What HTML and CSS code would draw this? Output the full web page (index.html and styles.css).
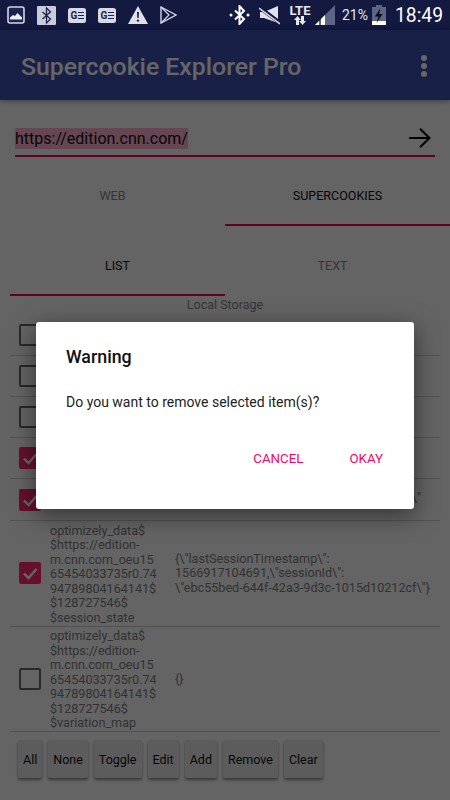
FILE: index.html
```html
<!DOCTYPE html>
<html lang="en">
<head>
    <meta charset="UTF-8">
    <meta name="viewport" content="width=device-width, initial-scale=1.0">
    <title>Supercookie Explorer Pro</title>
    <link rel="stylesheet" href="styles.css">
</head>
<body>
    <div class="screen">
        <!-- Status Bar -->
        <div class="status-bar">
            <div class="notify-icons">
                <svg class="notify" width="18" height="18" viewBox="0 0 18 18"><rect x="1" y="1" width="16" height="16" rx="2" fill="#1b2350" stroke="#d4d6e2" stroke-width="1.6"/><path d="M3 13.5v-2l3-2.5 2 1 2.5-3 4.5 4.5v2z" fill="#eceef4"/></svg>
                <svg class="notify" width="19" height="19" viewBox="0 0 19 19"><rect width="19" height="19" rx="1" fill="#c9cbdb"/><path d="M5.5 6l8 7-4 4V2l4 4-8 7" fill="none" stroke="#1b2350" stroke-width="1.3"/></svg>
                <svg class="notify" width="18" height="15" viewBox="0 0 18 15"><rect width="18" height="15" rx="2.5" fill="#d6d8e4"/><text x="2.5" y="11" class="g-text">G</text><path d="M10 4.5h6M10 7.5h6M10 10.5h6" stroke="#1b2350" stroke-width="1.1"/></svg>
                <svg class="notify" width="18" height="15" viewBox="0 0 18 15"><rect width="18" height="15" rx="2.5" fill="#d6d8e4"/><text x="2.5" y="11" class="g-text">G</text><path d="M10 4.5h6M10 7.5h6M10 10.5h6" stroke="#1b2350" stroke-width="1.1"/></svg>
                <svg class="notify" width="20" height="18" viewBox="0 0 20 18"><path d="M10 0l10 18H0z" fill="#dfe0ea"/><path d="M9 6h2l-.3 6H9.3z" fill="#1b2350"/><circle cx="10" cy="14.6" r="1.2" fill="#1b2350"/></svg>
                <svg class="notify" width="17" height="18" viewBox="0 0 17 18"><path d="M1 1l15 8L1 17z" fill="none" stroke="#d4d6e2" stroke-width="1.4"/><path d="M1 1l8 8-8 8" fill="none" stroke="#d4d6e2" stroke-width="1.2"/></svg>
            </div>
            <div class="system-icons">
                <svg width="21" height="20" viewBox="0 0 21 20"><path d="M6 5.5l9 8.5-4.5 5V1L15 6l-9 8.500" fill="none" stroke="#fff" stroke-width="2"/><circle cx="2" cy="10" r="1.500" fill="#fff"/><circle cx="19" cy="10" r="1.500" fill="#fff"/></svg>
                <svg class="mute" width="21" height="20" viewBox="0 0 21 20"><path d="M1 7h4l14-6v17L5 13H1z" fill="#dfe0ea"/><path d="M0 2l21 16" stroke="#13193f" stroke-width="4"/><path d="M0 3l21 16" stroke="#dfe0ea" stroke-width="1.500"/></svg>
                <div class="lte">
                    <span class="lte-text">LTE</span>
                    <svg width="12" height="9" viewBox="0 0 12 9"><path d="M3.500 0L7 4H5v5H2V4H0zM8.500 9L5 5h2V0h3v5h2z" fill="#e6e7ef"/></svg>
                </div>
                <svg class="signal" width="20" height="20" viewBox="0 0 20 20"><path d="M0 20L20 0v20z" fill="#5d6486"/><path d="M0 20l4-4v4zM6 20v-6l4-4v10z" fill="#fff"/></svg>
                <span class="battery-text">21%</span>
                <svg class="battery" width="14" height="20" viewBox="0 0 14 20"><path d="M4 0h6v2h4v18H0V2h4z" fill="#5d6486"/><path d="M0 16h14v4H0z" fill="#fff"/><path d="M8.500 3L3 11.500h3.500L4.500 18l6-9H7z" fill="#080a14"/></svg>
                <span class="clock">18:49</span>
            </div>
        </div>

        <!-- Toolbar -->
        <div class="toolbar">
            <span class="toolbar-title">Supercookie Explorer Pro</span>
            <div class="overflow-menu"><i></i><i></i><i></i></div>
        </div>

        <!-- URL Row -->
        <div class="url-row">
            <span class="url-text">https://edition.cnn.com/</span>
            <svg width="22" height="20" viewBox="0 0 22 20"><path d="M0 10h20M11 .800L20.500 10 11 19.200" fill="none" stroke="#000" stroke-width="2"/></svg>
        </div>

        <!-- Main Tabs -->
        <div class="tabs">
            <div class="tab">WEB</div>
            <div class="tab active">SUPERCOOKIES</div>
        </div>

        <!-- Sub Tabs -->
        <div class="tabs sub-tabs">
            <div class="tab active">LIST</div>
            <div class="tab">TEXT</div>
        </div>

        <div class="section-label">Local Storage</div>

        <!-- Storage List -->
        <div class="list">
            <div class="row short">
                <span class="check"></span>
            </div>
            <div class="row short">
                <span class="check"></span>
            </div>
            <div class="row short">
                <span class="check"></span>
            </div>
            <div class="row short">
                <span class="check checked"><svg width="22" height="22" viewBox="0 0 22 22"><path d="M5 11.500l4.500 4.500L17.500 7" fill="none" stroke="#fff" stroke-width="2.400"/></svg></span>
            </div>
            <div class="row short">
                <span class="check checked"><svg width="22" height="22" viewBox="0 0 22 22"><path d="M5 11.500l4.500 4.500L17.500 7" fill="none" stroke="#fff" stroke-width="2.400"/></svg></span>
                <div class="row-tail">\"</div>
            </div>
            <div class="row">
                <span class="check checked"><svg width="22" height="22" viewBox="0 0 22 22"><path d="M5 11.500l4.500 4.500L17.500 7" fill="none" stroke="#fff" stroke-width="2.400"/></svg></span>
                <div class="row-name">optimizely_data$<br>$https://edition-<br>m.cnn.com_oeu15<br>65454033735r0.74<br>94789804164141$<br>$128727546$<br>$session_state</div>
                <div class="row-value">{\"lastSessionTimestamp\":<br>1566917104691,\"sessionId\":<br>\"ebc55bed-644f-42a3-9d3c-1015d10212cf\"}</div>
            </div>
            <div class="row">
                <span class="check"></span>
                <div class="row-name">optimizely_data$<br>$https://edition-<br>m.cnn.com_oeu15<br>65454033735r0.74<br>94789804164141$<br>$128727546$<br>$variation_map</div>
                <div class="row-value">{}</div>
            </div>
        </div>

        <!-- Action Buttons -->
        <div class="actions">
            <button class="action">All</button>
            <button class="action">None</button>
            <button class="action">Toggle</button>
            <button class="action">Edit</button>
            <button class="action">Add</button>
            <button class="action">Remove</button>
            <button class="action">Clear</button>
        </div>

        <!-- Dialog -->
        <div class="scrim">
            <div class="dialog">
                <div class="dialog-title">Warning</div>
                <div class="dialog-body">Do you want to remove selected item(s)?</div>
                <div class="dialog-buttons">
                    <span class="dialog-button">CANCEL</span>
                    <span class="dialog-button">OKAY</span>
                </div>
            </div>
        </div>
    </div>
</body>
</html>
```

FILE: styles.css
```css
/* General Styles */
body {
    margin: 0;
    font-family: Roboto, "Liberation Sans", sans-serif;
    background: #fafafa;
}

.screen {
    position: relative;
    width: 450px;
    height: 800px;
    overflow: hidden;
    background: #fafafa;
}

/* Status Bar */
.status-bar {
    display: flex;
    justify-content: space-between;
    align-items: center;
    height: 30px;
    background: #13193f;
    color: #fff;
}

.notify-icons {
    display: flex;
    align-items: center;
    margin-left: 1px;
}

.notify {
    display: block;
    margin: 0 6px;
}

.g-text {
    font-size: 10px;
    font-weight: 700;
    fill: #1b2350;
}

.system-icons {
    display: flex;
    align-items: center;
    margin-right: 7px;
}

.mute {
    margin-left: 9px;
}

.lte {
    display: flex;
    flex-direction: column;
    align-items: center;
    margin-left: 9px;
    width: 22px;
}

.lte-text {
    font-size: 13px;
    font-weight: 700;
    line-height: 11px;
    color: #e6e7ef;
}

.signal {
    margin-left: 4px;
}

.battery-text {
    margin-left: 7px;
    font-size: 14px;
    color: #e6e7ef;
}

.battery {
    margin-left: 4px;
}

.clock {
    margin-left: 9px;
    font-size: 19.3px;
}

/* Toolbar */
.toolbar {
    display: flex;
    justify-content: space-between;
    align-items: center;
    height: 70px;
    padding: 2px 23px 0 21px;
    background: #3f51b5;
    box-shadow: 0 1px 6px rgba(0, 0, 0, 0.4);
    color: #fff;
    box-sizing: border-box;
}

.toolbar-title {
    font-size: 24.8px;
    font-weight: 500;
}

.overflow-menu {
    display: flex;
    flex-direction: column;
    gap: 2px;
}

.overflow-menu i {
    width: 6px;
    height: 6px;
    border-radius: 50%;
    background: #fff;
}

/* URL Row */
.url-row {
    display: flex;
    justify-content: space-between;
    align-items: center;
    height: 28px;
    margin: 24px 15px 0;
    padding-bottom: 3px;
    border-bottom: 2px solid #ff0057;
}

.url-text {
    font-size: 16px;
    line-height: 21px;
    background: #ffb0d0;
    color: #111;
}

.url-row svg {
    margin: 0 4px 1px 0;
}

/* Tabs */
.tabs {
    display: flex;
}

.tab {
    flex: 1;
    height: 67px;
    line-height: 78px;
    text-align: center;
    font-size: 12.5px;
    font-weight: 450;
    color: #888;
    border-bottom: 2px solid transparent;
}

.tab.active {
    color: #111;
    border-bottom-color: #ff0057;
}

.sub-tabs {
    margin: 0 10px;
}

.sub-tabs .tab {
    height: 68px;
    line-height: 80px;
}

.section-label {
    height: 19px;
    line-height: 18px;
    text-align: center;
    font-size: 12.5px;
    color: #888;
}

/* Storage List */
.list {
    margin: 0 10px;
}

.row {
    display: flex;
    align-items: center;
    border-bottom: 1px solid #ccc;
    padding-left: 9px;
    font-size: 12.6px;
    line-height: 14.5px;
    color: #808080;
}

.row.short {
    height: 40px;
}

.row.short:nth-child(5) {
    height: 41px;
}

.check {
    flex: none;
    width: 22px;
    height: 22px;
    box-sizing: border-box;
    border: 2px solid #666;
    border-radius: 2px;
}

.check.checked {
    border: none;
    background: #ff2a70;
}

.check svg {
    display: block;
}

.row-name {
    flex: none;
    width: 125px;
    margin-left: 9px;
    padding: 2.5px 0 0.5px;
}

.row-value {
    flex: 1;
    white-space: nowrap;
}

.row-tail {
    flex: 1;
    padding-right: 19px;
    padding-bottom: 3px;
    text-align: right;
}

/* Action Buttons */
.actions {
    display: flex;
    gap: 6px;
    margin: 8px 0 0 18px;
}

.action {
    height: 38px;
    padding: 0 5px;
    border: none;
    border-radius: 2px;
    background: #e6e6e6;
    box-shadow: 0 2px 3px rgba(0, 0, 0, 0.45);
    font-family: inherit;
    font-size: 12.5px;
    color: #111;
}

/* Dialog */
.scrim {
    position: absolute;
    top: 30px;
    left: 0;
    right: 0;
    bottom: 0;
    display: flex;
    justify-content: center;
    align-items: center;
    background: rgba(0, 0, 0, 0.6);
}

.dialog {
    width: 378px;
    height: 187px;
    box-sizing: border-box;
    padding: 24px 31px 0 30px;
    border-radius: 3px;
    background: #fff;
    color: #111;
    box-shadow: 0 6px 24px rgba(0, 0, 0, 0.5);
}

.dialog-title {
    font-size: 17.8px;
    font-weight: 500;
    line-height: 22px;
}

.dialog-body {
    margin-top: 23px;
    font-size: 14px;
    line-height: 22px;
    color: #222;
}

.dialog-buttons {
    display: flex;
    justify-content: flex-end;
    gap: 46px;
    margin-top: 35px;
}

.dialog-button {
    font-size: 13.3px;
    font-weight: 450;
    line-height: 22px;
    color: #ff0066;
}
```
